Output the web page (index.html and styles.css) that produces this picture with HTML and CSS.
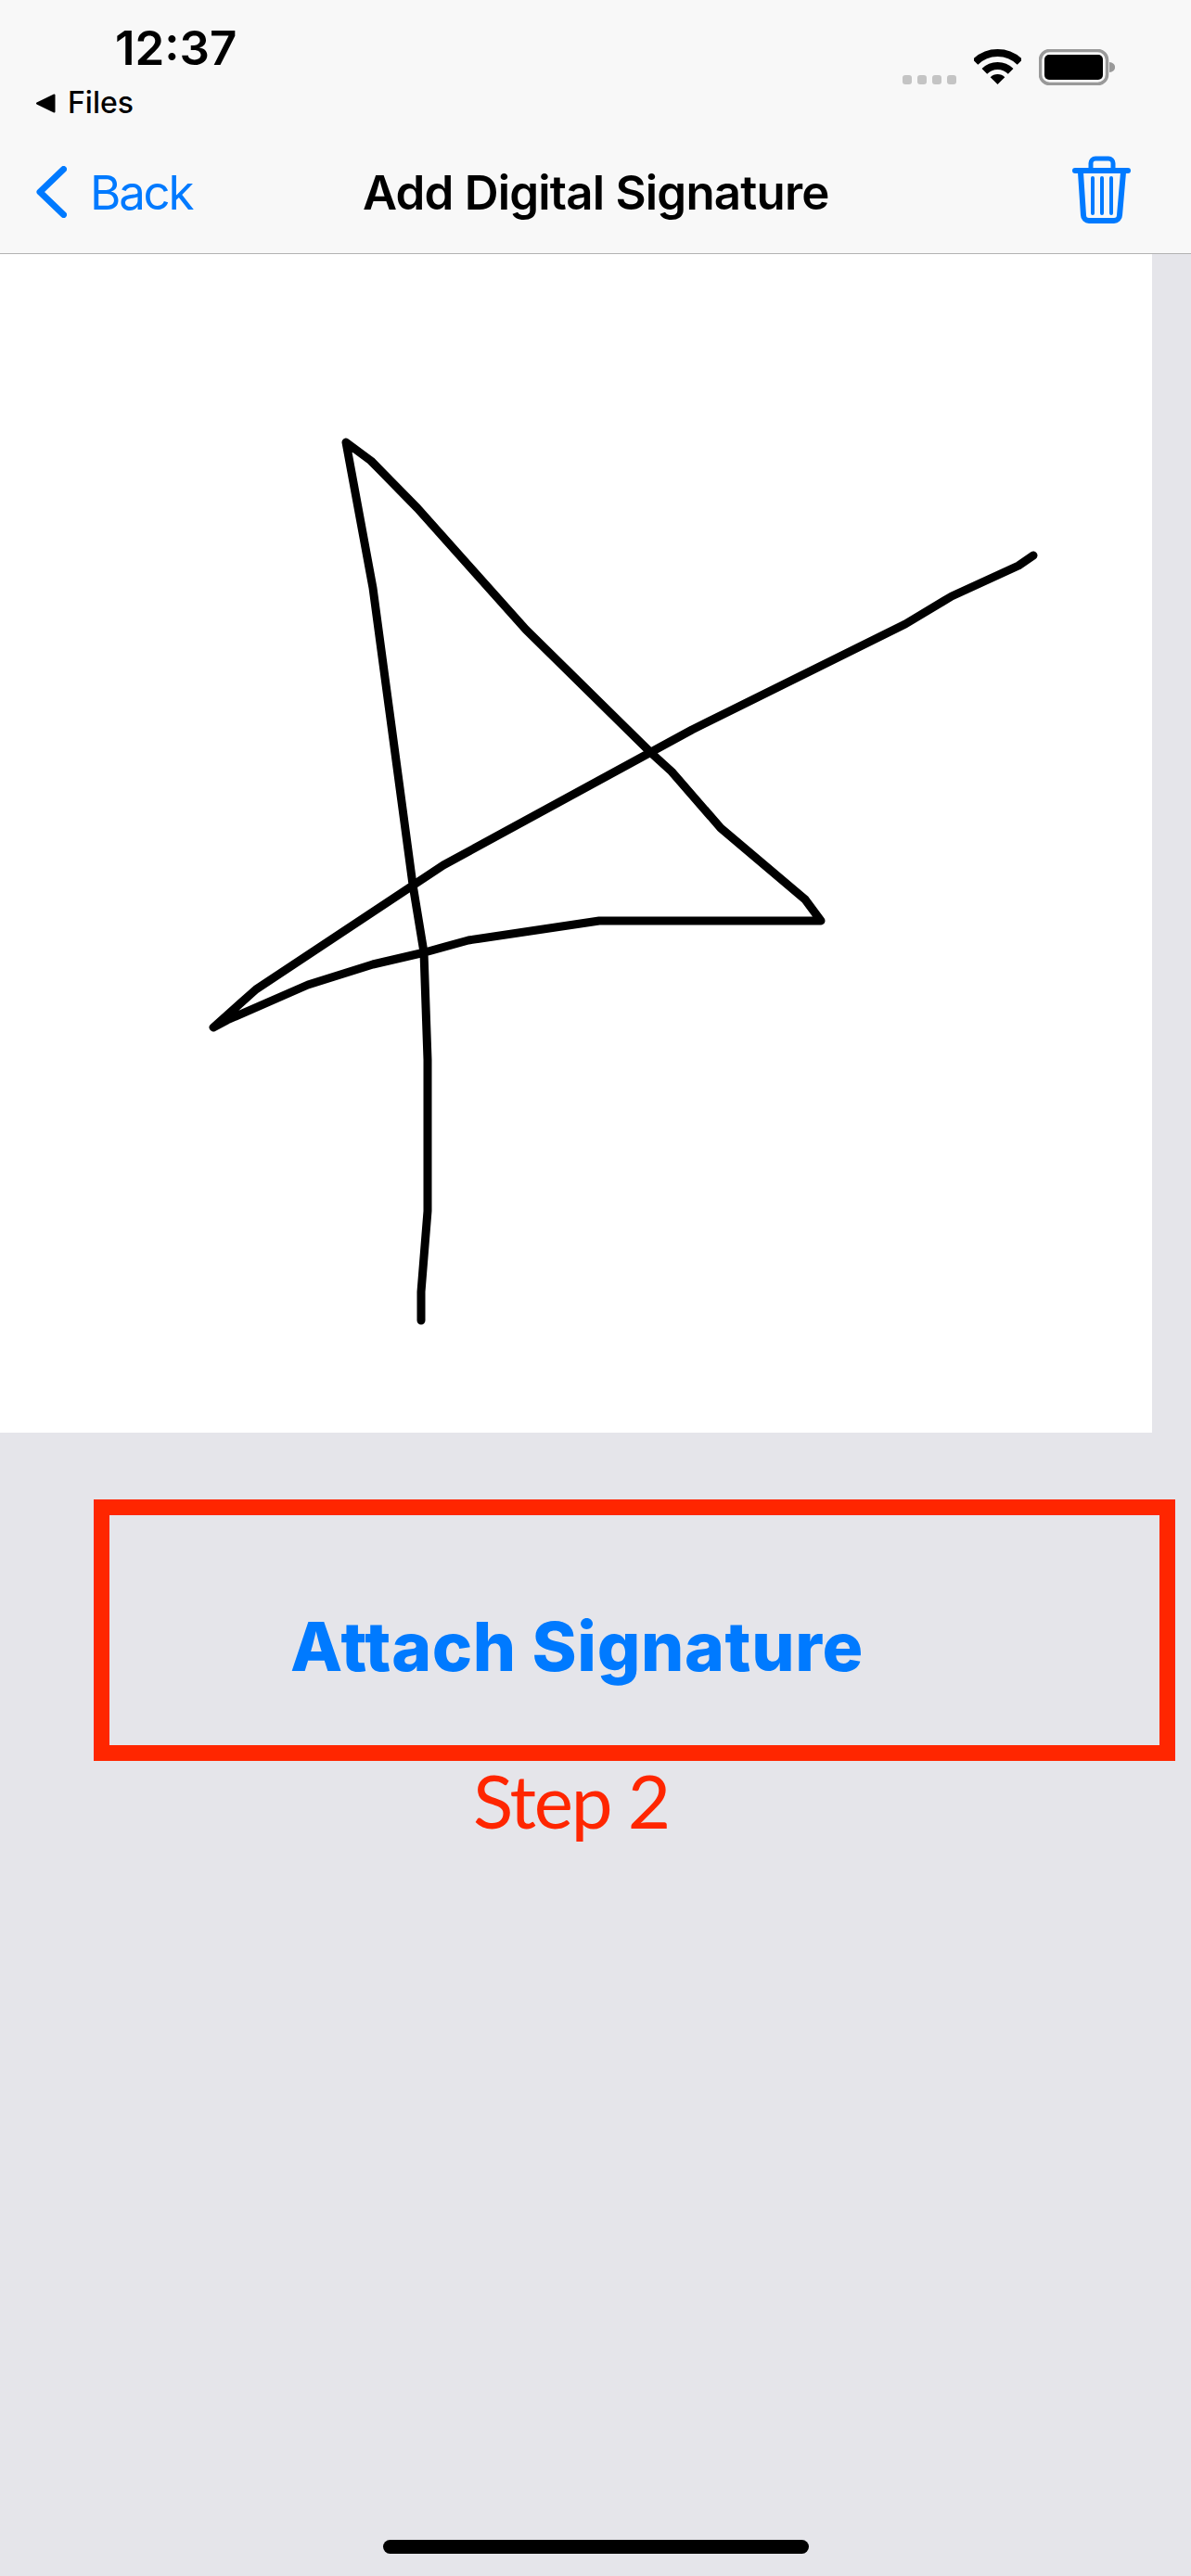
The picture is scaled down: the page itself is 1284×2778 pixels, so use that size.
FILE: index.html
```html
<!DOCTYPE html>
<html>
<head>
  <title>Add Digital Signature</title>
  <link rel="stylesheet" href="styles.css">
</head>
<body>
  <div class="page">
    <header class="top">
      <div class="status">
        <div class="status-left">
          <div class="time">12:37</div>
          <div class="crumb">
            <svg class="crumb-arrow" viewBox="0 0 22 21"><path d="M20.5 1.5V19.5L2 10.5Z"/></svg>
            <span>Files</span>
          </div>
        </div>
        <div class="status-right">
          <div class="dots"><i></i><i></i><i></i><i></i></div>
          <svg class="wifi" viewBox="0 0 51 38">
            <path class="wifi-fill" d="M25.5 38L17.7 30.2A11 11 0 0 1 33.3 30.2Z"/>
            <path class="wifi-arc" d="M11.36 23.86A20 20 0 0 1 39.64 23.86"/>
            <path class="wifi-arc" d="M1.46 13.96A34 34 0 0 1 49.54 13.96"/>
          </svg>
          <svg class="battery" viewBox="0 0 82 39">
            <rect x="1.5" y="1.5" width="72" height="36" rx="10" fill="none" stroke="#999" stroke-width="3.5"/>
            <rect x="6" y="6" width="63" height="27" rx="5" fill="#000"/>
            <path d="M76 14a6 5 0 0 1 6 5.5a6 5 0 0 1-6 5.5Z" fill="#999"/>
          </svg>
        </div>
      </div>
      <nav class="nav">
        <div class="back">
          <svg class="chevron" viewBox="0 0 33 56"><path d="M29.5 3.5L4 28L29.5 52.5"/></svg>
          <span>Back</span>
        </div>
        <h1 class="title">Add Digital Signature</h1>
        <svg class="trash" viewBox="0 0 63 73">
          <path d="M3 16H60" stroke-width="6"/>
          <path d="M20 14V8a5 5 0 0 1 5-5H39a5 5 0 0 1 5 5V14" stroke-width="5"/>
          <path d="M9 18L12 64a6 6 0 0 0 6 6H45a6 6 0 0 0 6-6L55 18" stroke-width="6"/>
          <path d="M22 24V62M32 24V62M42 24V62" stroke-width="4"/>
        </svg>
      </nav>
    </header>

    <section class="canvas">
      <svg class="ink" viewBox="0 274 1242 1271">
        <path d="M454 1424V1393L461 1306V1143L457 1027L445 954L402 634L373 477L400 497L450 548L567 679L702 812L724 832L777 893L868 970L885 993H646L505 1014L458 1027L402 1040L332 1062L245 1100L230 1108L276 1067L478 933L746 787L976 673L1026 643L1098 610L1114 599"/>
      </svg>
    </section>

    <div class="step-box">
      <span class="attach">Attach Signature</span>
    </div>
    <div class="step-label">Step 2</div>

    <div class="home-bar"></div>
  </div>
</body>
</html>
```

FILE: styles.css
```css
* { box-sizing: border-box; }
body { margin: 0; background: #e5e5ea; font-family: Inter, "Liberation Sans", sans-serif; color: #000; }
.page { width: 1284px; height: 2778px; display: flex; flex-direction: column; overflow: hidden; }

.top { height: 274px; background: #f8f8f8; border-bottom: 1px solid #b2b2b2; }
.status { height: 152px; display: flex; justify-content: space-between; }
.status-left { padding: 25px 0 0 38px; }
.time { margin-left: 86px; font-size: 51px; line-height: 54px; font-weight: 600; }
.crumb { display: flex; align-items: center; gap: 13px; margin-top: 13px; font-size: 32px; line-height: 38px; font-weight: 500; }
.crumb-arrow { width: 22px; height: 21px; fill: #000; stroke: #000; stroke-width: 2; stroke-linejoin: round; }
.status-right { display: flex; align-items: flex-start; padding: 53px 82px 0 0; }
.dots { display: flex; gap: 6px; margin: 28px 19px 0 0; }
.dots i { width: 10px; height: 10px; border-radius: 3px; background: #c4c4c4; }
.wifi { width: 51px; height: 38px; margin-right: 19px; }
.wifi-fill { fill: #000; }
.wifi-arc { fill: none; stroke: #000; stroke-width: 8; }
.battery { width: 82px; height: 39px; }

.nav { height: 121px; display: flex; align-items: flex-start; }
.back { display: flex; align-items: flex-start; width: 391px; padding: 27px 0 0 39px; color: #007aff; font-size: 51px; line-height: 58px; letter-spacing: -2.2px; }
.chevron { width: 33px; height: 56px; margin-right: 25px; fill: none; stroke: #007aff; stroke-width: 7; stroke-linecap: round; stroke-linejoin: round; }
.title { margin: 27px 0 0; width: 501px; font-size: 51px; line-height: 58px; font-weight: 600; letter-spacing: -0.8px; white-space: nowrap; }
.trash { width: 63px; height: 73px; margin: 16px 0 0 264px; fill: none; stroke: #007aff; stroke-linecap: round; stroke-linejoin: round; }

.canvas { width: 1242px; height: 1271px; background: #fff; }
.ink { display: block; width: 1242px; height: 1271px; fill: none; stroke: #000; stroke-width: 9; stroke-linecap: round; stroke-linejoin: round; }

.step-box { width: 1166px; height: 282px; margin: 72px 0 0 101px; padding: 98px 0 0 195px; border: 17px solid #ff2600; }
.attach { display: block; color: #007aff; font-size: 73px; line-height: 88px; font-weight: 800; letter-spacing: 0.65px; white-space: nowrap; }
.step-label { margin: -5px 0 0 510px; color: #ff2600; font-family: Lato, sans-serif; font-size: 80px; line-height: 94px; letter-spacing: -2.2px; }

.home-bar { width: 459px; height: 15px; margin: auto 0 24px 413px; border-radius: 8px; background: #000; }
```
